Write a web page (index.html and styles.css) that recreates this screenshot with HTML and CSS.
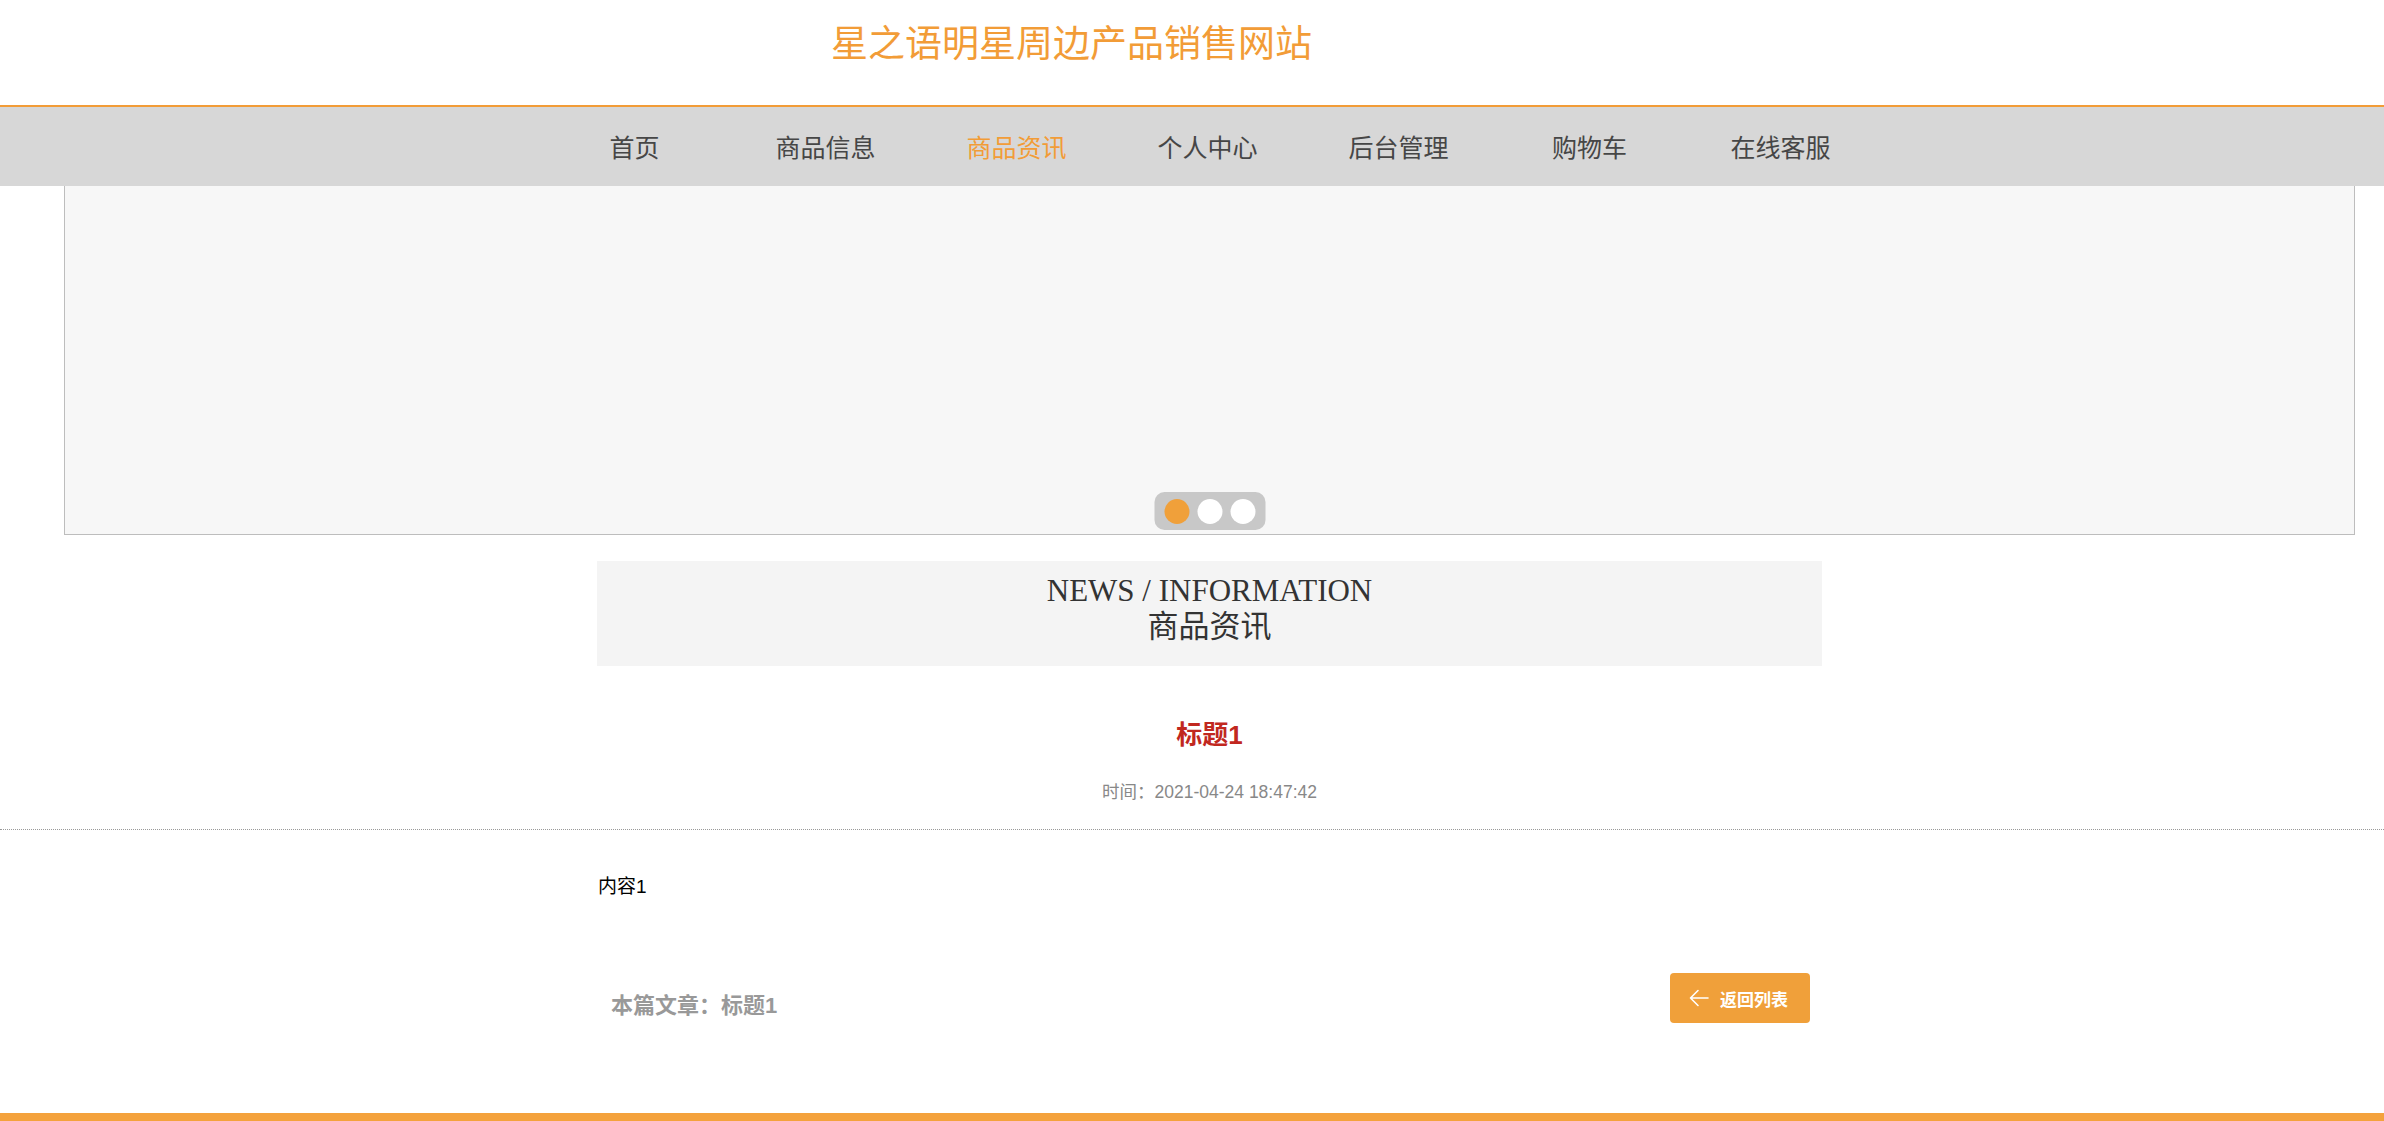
FILE: index.html
```html
<!DOCTYPE html>
<html lang="zh-CN">
<head>
<meta charset="utf-8">
<title>星之语明星周边产品销售网站</title>
<link rel="stylesheet" href="styles.css">
</head>
<body>
<header class="header">
  <h1 class="brand">星之语明星周边产品销售网站</h1>
</header>
<nav class="nav">
  <ul class="nav-list">
    <li class="nav-item">首页</li>
    <li class="nav-item">商品信息</li>
    <li class="nav-item active">商品资讯</li>
    <li class="nav-item">个人中心</li>
    <li class="nav-item">后台管理</li>
    <li class="nav-item">购物车</li>
    <li class="nav-item">在线客服</li>
  </ul>
</nav>
<section class="banner">
  <div class="dots">
    <span class="dot on"></span>
    <span class="dot"></span>
    <span class="dot"></span>
  </div>
</section>
<div class="wrap">
  <div class="section-title">
    <div class="en">NEWS / INFORMATION</div>
    <div class="cn">商品资讯</div>
  </div>
  <h2 class="news-title">标题1</h2>
  <div class="news-time">时间：2021-04-24 18:47:42</div>
</div>
<div class="divider"></div>
<div class="wrap">
  <div class="news-content">内容1</div>
  <div class="news-foot">
    <div class="this-article">本篇文章：标题1</div>
    <button class="back-btn"><svg class="back-ico" width="20" height="18" viewBox="0 0 20 18"><path d="M1.5 9H19M9 1.5L1.5 9L9 16.5" fill="none" stroke="#fff" stroke-width="1.6" stroke-linecap="round" stroke-linejoin="round"/></svg><span>返回列表</span></button>
  </div>
</div>
<footer class="footer-bar"></footer>
</body>
</html>
```
FILE: styles.css
```css
html, body {
  margin: 0;
  padding: 0;
  background: #fff;
}
body {
  font-family: "Liberation Sans", "Noto Sans CJK SC", sans-serif;
  color: #000;
  overflow: hidden;
}
.header {
  height: 105px;
}
.brand {
  margin: 0;
  padding-left: 831px;
  font-family: "Noto Sans CJK SC", sans-serif;
  font-weight: 400;
  font-size: 37px;
  line-height: 82px;
  color: #f29c37;
}
.nav {
  border-top: 2px solid #f29c37;
  background: #d7d7d7;
  height: 79px;
}
.nav-list {
  list-style: none;
  margin: 0;
  padding: 0 0 0 539px;
  display: flex;
}
.nav-item {
  width: 191px;
  text-align: center;
  font-family: "Noto Sans CJK SC", sans-serif;
  font-size: 25px;
  line-height: 79px;
  color: #464646;
}
.nav-item.active {
  color: #f29c37;
}
.banner {
  position: relative;
  margin-left: 64px;
  width: 2291px;
  height: 349px;
  box-sizing: border-box;
  background: #f7f7f7;
  border: 1px solid #bdbdbd;
  border-top: none;
}
.dots {
  position: absolute;
  left: 50%;
  bottom: 4px;
  transform: translateX(-50%);
  height: 38px;
  padding: 0 10px;
  box-sizing: border-box;
  display: flex;
  align-items: center;
  gap: 8px;
  background: #c8c8c8;
  border-radius: 10px;
}
.dot {
  width: 25px;
  height: 25px;
  border-radius: 50%;
  background: #fff;
}
.dot.on {
  background: #f0a03a;
}
.wrap {
  margin-left: 597px;
  width: 1225px;
}
.section-title {
  margin-top: 26px;
  height: 105px;
  box-sizing: border-box;
  padding-top: 12px;
  background: #f4f4f4;
  text-align: center;
  color: #333;
  font-family: "Liberation Serif", "Noto Sans CJK SC", serif;
  font-size: 31px;
  line-height: 36px;
}
.section-title .cn {
  font-size: 31px;
}
.news-title {
  margin: 49px 0 0;
  text-align: center;
  font-size: 26px;
  font-weight: 700;
  line-height: 40px;
  color: #c1281f;
}
.news-time {
  margin-top: 25px;
  text-align: center;
  font-size: 17.5px;
  line-height: 24px;
  color: #888;
}
.divider {
  margin-top: 25px;
  border-top: 1px dotted #999;
}
.news-content {
  margin-top: 42px;
  padding-left: 1px;
  font-size: 19px;
  line-height: 30px;
  color: #000;
}
.news-foot {
  margin-top: 71px;
  display: flex;
  justify-content: space-between;
  align-items: flex-end;
  padding: 0 12px 0 14px;
}
.this-article {
  font-size: 22px;
  font-weight: 700;
  line-height: 34px;
  color: #999;
}
.back-btn {
  width: 140px;
  height: 50px;
  border: none;
  border-radius: 4px;
  background: #f0a03a;
  color: #fff;
  display: flex;
  align-items: center;
  gap: 11px;
  padding: 0 0 0 19px;
  font-family: "Liberation Sans", "Noto Sans CJK SC", sans-serif;
  font-size: 17px;
  font-weight: 700;
}
.back-ico {
  display: block;
}
.footer-bar {
  margin-top: 90px;
  height: 8px;
  background: #f4a23c;
}
```
